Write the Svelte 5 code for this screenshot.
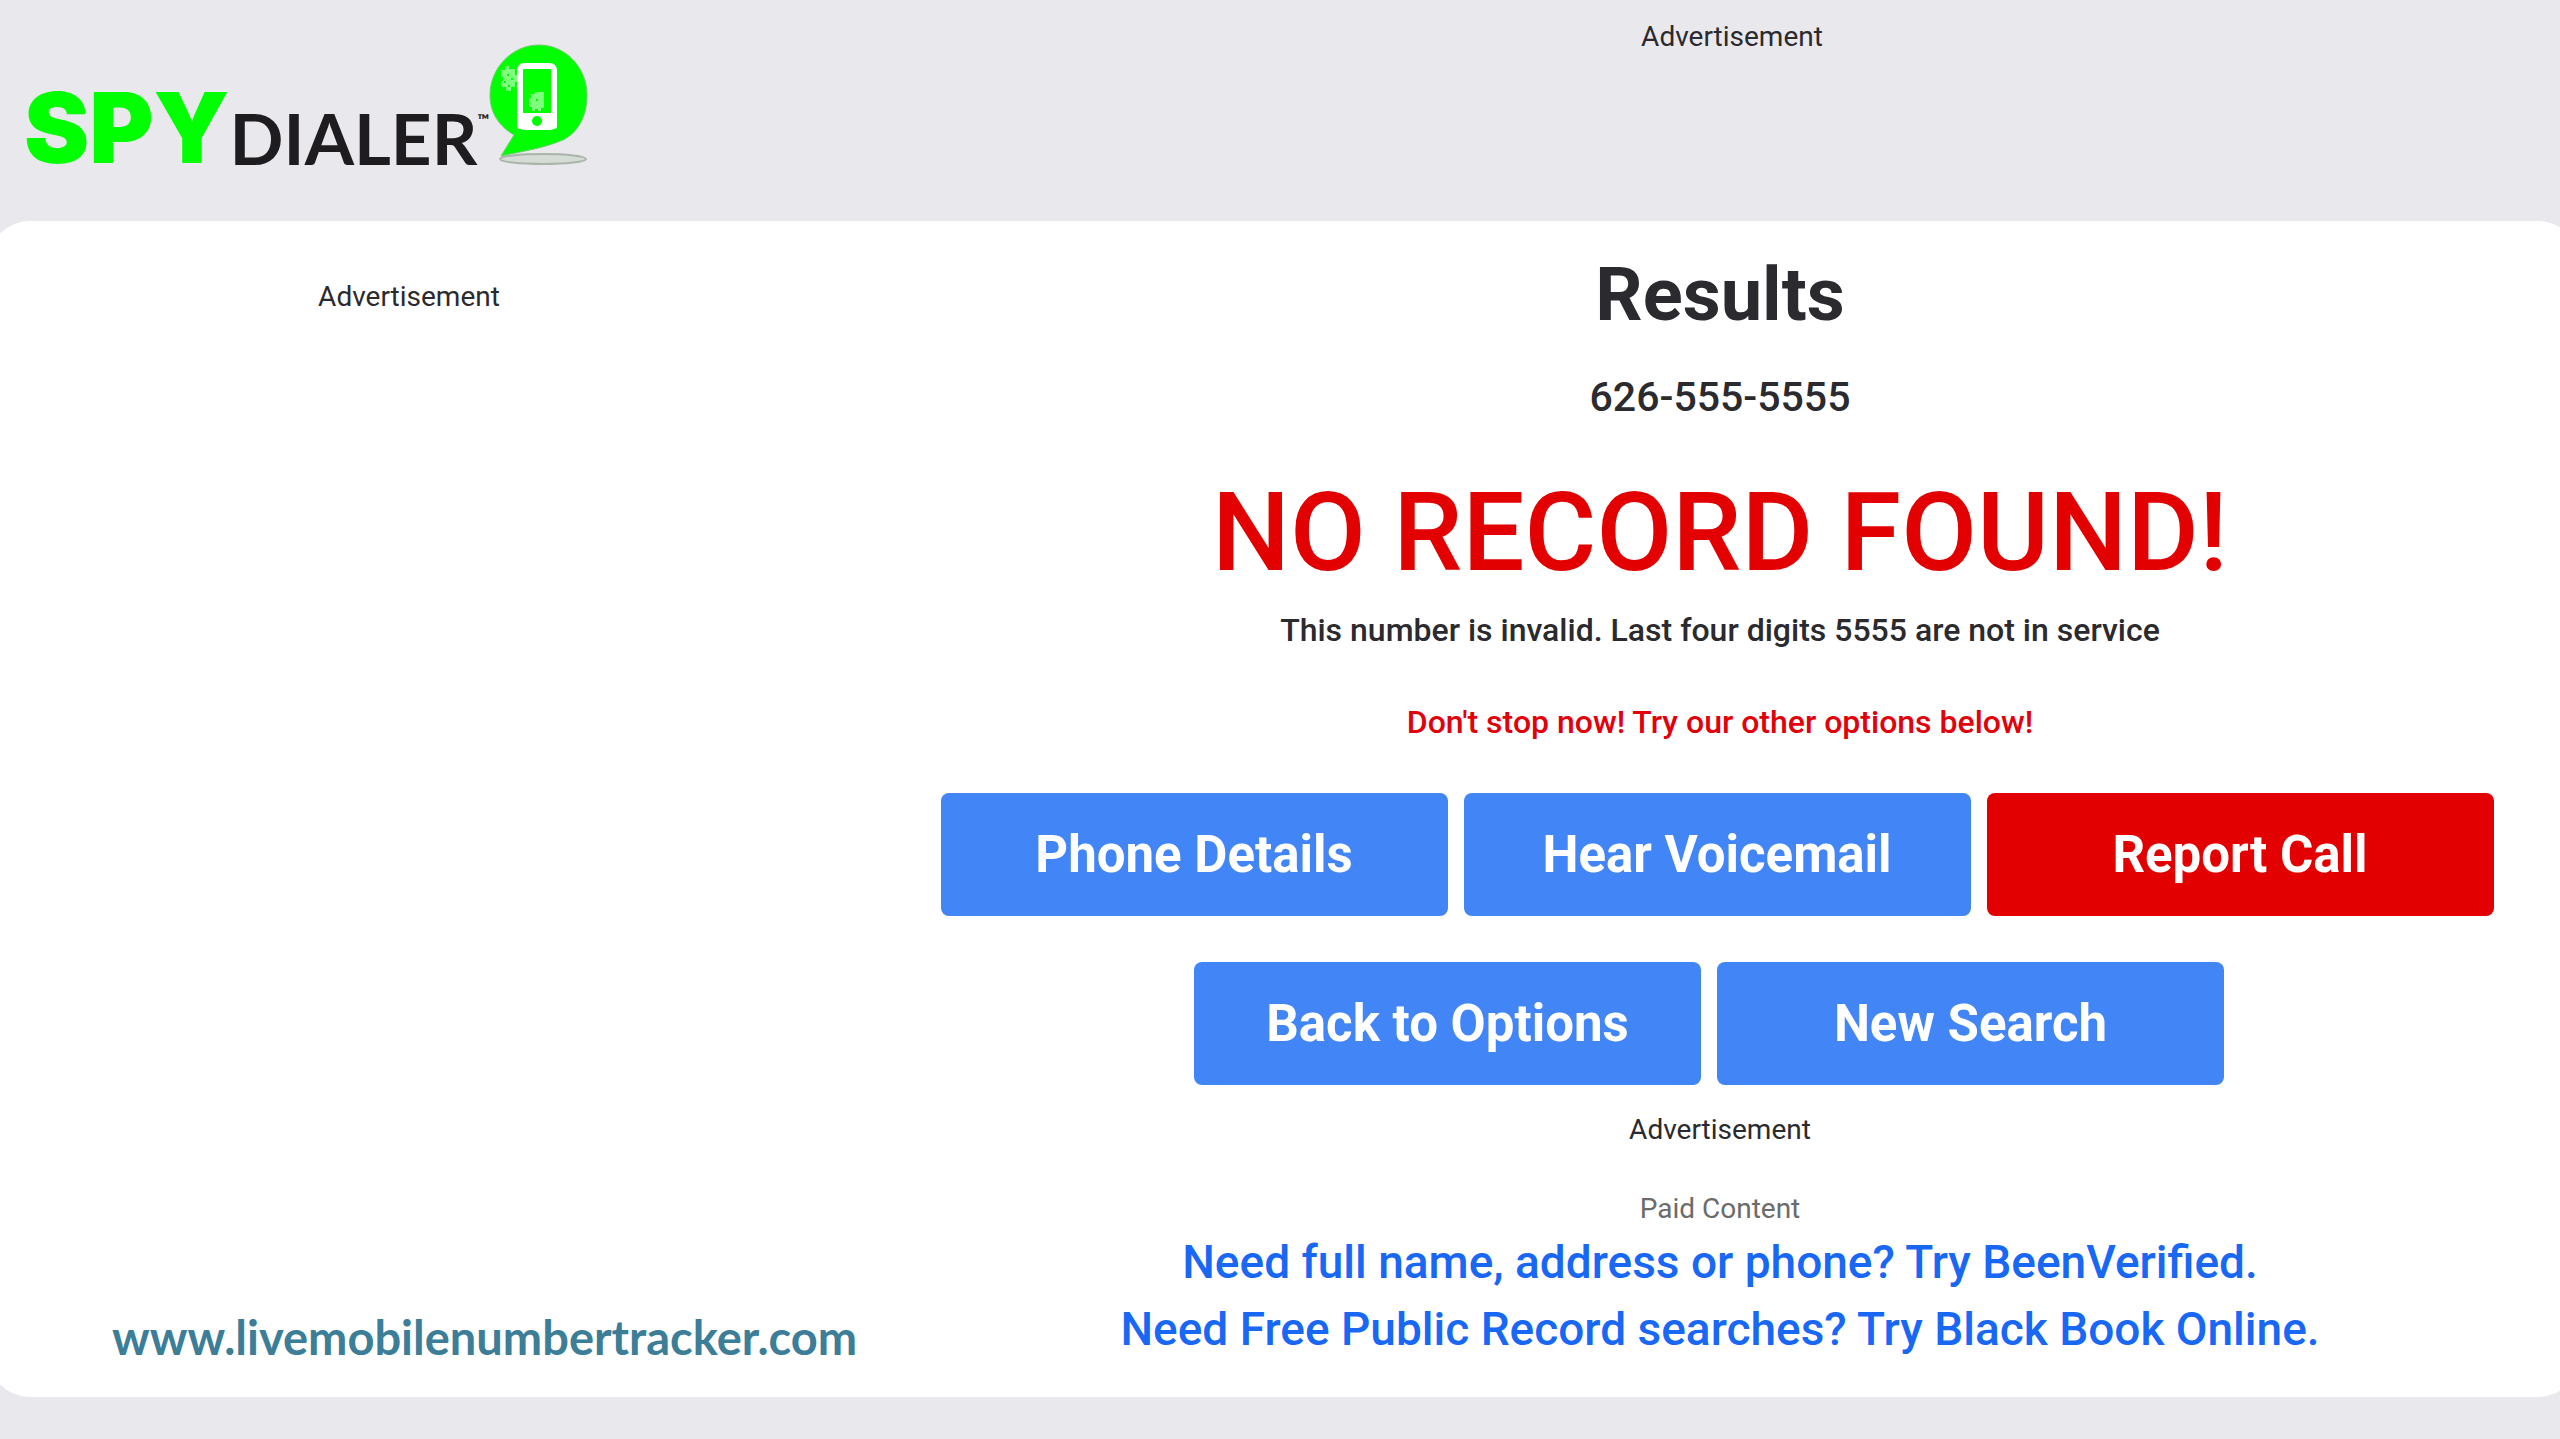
<script>
  const primary = [
    { label: 'Phone Details' },
    { label: 'Hear Voicemail' },
    { label: 'Report Call', danger: true },
  ];
  const secondary = ['Back to Options', 'New Search'];
</script>

<div class="page">
  <header>
    <a class="logo" href="/" aria-label="Spy Dialer home">
      <span class="spy">SPY</span>
      <span class="dialer">DIALER</span>
      <span class="tm">™</span>
      <svg class="bubble" viewBox="0 0 100 124" aria-hidden="true">
        <ellipse cx="54" cy="115" rx="43" ry="5" fill="#d5dcd6" stroke="#a9b5ab" stroke-width="2" />
        <path
          d="M50 1C77 1 98 24 98 51C98 71 90 88 74 96C55 104 35 107 12 112L25 91C10 82 1 69 1 51C1 24 23 1 50 1Z"
          fill="#00ff00" stroke="#6fce6f" stroke-width="1" />
        <rect x="31" y="22" width="34" height="61" rx="4" fill="none" stroke="#fff" stroke-width="6" />
        <rect x="28" y="69" width="40" height="16" rx="3" fill="#fff" />
        <circle cx="48" cy="77" r="5" fill="#00ff00" />
        <path d="M42 50h4v-2h9v16h-3v3h-3v-2h-3v2h-3v-4h-3v-9h2z" fill="#7dff7d" />
        <path d="M12 26h4v-4h4v3h6v6h2v7h-2v5h-4v4h-5v-4h-5v-6h2v-4h-2z" fill="#7dff7d" />
        <path d="M18 30h2v2h-2zM15 37h2v2h-2zM22 34h2v2h-2zM19 41h2v2h-2zM47 55h2v2h-2z" fill="#00ff00" />
      </svg>
    </a>
    <p class="ad">Advertisement</p>
  </header>

  <main>
    <aside>
      <p class="ad">Advertisement</p>
      <a class="site" href="http://www.livemobilenumbertracker.com">www.livemobilenumbertracker.com</a>
    </aside>

    <section>
      <h1>Results</h1>
      <p class="phone">626-555-5555</p>
      <h2>NO RECORD FOUND!</h2>
      <p class="note">This number is invalid. Last four digits 5555 are not in service</p>
      <p class="note hint">Don't stop now! Try our other options below!</p>

      <div class="row first">
        {#each primary as item}
          <button type="button" class:danger={item.danger}>{item.label}</button>
        {/each}
      </div>
      <div class="row second">
        {#each secondary as label}
          <button type="button">{label}</button>
        {/each}
      </div>

      <p class="ad">Advertisement</p>
      <p class="ad paid">Paid Content</p>
      <a class="promo" href="#beenverified">Need full name, address or phone? Try BeenVerified.</a>
      <a class="promo" href="#blackbook">Need Free Public Record searches? Try Black Book Online.</a>
    </section>
  </main>
</div>

<style>
  :global(body) {
    margin: 0;
    background: #e9e8ed;
  }
  .page {
    min-height: 100vh;
    box-sizing: border-box;
    padding-bottom: 40px;
    overflow-x: hidden;
    font-family: Roboto, sans-serif;
    color: #2b2a2e;
  }
  p, h1, h2 {
    margin: 0;
  }
  a {
    text-decoration: none;
  }
  header {
    display: grid;
    grid-template-columns: 904px 1fr;
    min-height: 221px;
  }
  .ad {
    font-size: 28px;
    line-height: 32px;
    text-align: center;
  }
  header .ad {
    padding-top: 21px;
  }
  .logo {
    display: flex;
    align-items: flex-start;
    padding: 44px 0 0 24px;
    color: #1f1c20;
  }
  .spy {
    font: 900 98px/120px Inter, sans-serif;
    color: #00ff00;
    padding-top: 24px;
  }
  .dialer {
    font: 700 71px/80px Lato, sans-serif;
    padding-top: 54px;
  }
  .tm {
    font: 700 16px/20px Lato, sans-serif;
    padding-top: 66px;
  }
  .bubble {
    width: 100px;
    height: 124px;
  }
  main {
    display: grid;
    grid-template-columns: 818px 1fr;
    margin: 0 -20px 0 -12px;
    padding: 0 20px 0 12px;
    border-radius: 42px;
    background: #fff;
  }
  aside {
    display: flex;
    flex-direction: column;
    justify-content: space-between;
    padding: 60px 0 32px;
  }
  .site {
    padding-left: 112px;
    font: 700 47px/56px Lato, sans-serif;
    color: #3c7d98;
  }
  section {
    display: flex;
    flex-direction: column;
    padding: 30px 0 34px 62px;
    text-align: center;
  }
  h1 {
    font-size: 74px;
    line-height: 88px;
    font-weight: 700;
  }
  .phone {
    margin-top: 32px;
    font-size: 41px;
    line-height: 52px;
    font-weight: 500;
  }
  h2 {
    margin-top: 50px;
    font-size: 110px;
    line-height: 120px;
    font-weight: 500;
    color: #e20000;
  }
  .note {
    margin-top: 17px;
    font-size: 32px;
    line-height: 40px;
    font-weight: 500;
  }
  .hint {
    margin-top: 52px;
    color: #e2000a;
  }
  .row {
    display: flex;
    justify-content: center;
    gap: 16px;
  }
  .first {
    margin-top: 51px;
    padding-right: 6px;
  }
  .second {
    margin: 46px 0 29px;
    padding-right: 22px;
  }
  button {
    width: 507px;
    height: 123px;
    padding: 0;
    border: 0;
    border-radius: 8px;
    background: #4285f6;
    color: #fff;
    font: 700 51px/60px Roboto, sans-serif;
  }
  .danger {
    background: #e20000;
  }
  .paid {
    margin: 47px 0 4px;
    color: #6b6b6b;
  }
  .promo {
    font-size: 46px;
    line-height: 67px;
    font-weight: 500;
    color: #1967f5;
  }
</style>
